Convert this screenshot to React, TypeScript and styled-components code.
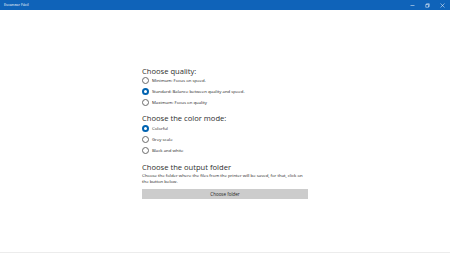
import styled, { createGlobalStyle } from "styled-components";

const GlobalStyle = createGlobalStyle`
  html, body {
    margin: 0;
    padding: 0;
    background: #ffffff;
  }
  body {
    font-family: "Open Sans", "Noto Sans", sans-serif;
  }
`;

const Window = styled.div`
  width: 450px;
  height: 253px;
  display: flex;
  flex-direction: column;
  background: #ffffff;
  overflow: hidden;
  border-bottom: 1px solid #ececec;
  box-sizing: border-box;
`;

const TitleBar = styled.div`
  height: 10px;
  background: #0f63b9;
  display: flex;
  align-items: center;
  justify-content: space-between;
  padding-left: 4px;
  color: #ffffff;
  flex-shrink: 0;
`;

const Title = styled.span`
  font-size: 3.8px;
  line-height: 10px;
`;

const Controls = styled.div`
  display: flex;
  height: 10px;
`;

const ControlButton = styled.div`
  width: 15px;
  height: 10px;
  display: flex;
  align-items: center;
  justify-content: center;
`;

const Content = styled.div`
  flex: 1;
  display: flex;
  justify-content: center;
  padding-top: 56px;
`;

const Column = styled.div`
  width: 166px;
  display: flex;
  flex-direction: column;
`;

const Heading = styled.h2<{ $top?: number }>`
  margin: ${(p) => p.$top ?? 0}px 0 0 0;
  font-size: 7.6px;
  font-weight: 400;
  color: #2e2e2e;
  line-height: 10px;
`;

const RadioList = styled.div<{ $top?: number }>`
  display: flex;
  flex-direction: column;
  gap: 3px;
  margin-top: ${(p) => p.$top ?? 0}px;
`;

const RadioRow = styled.label`
  display: flex;
  align-items: center;
  gap: 3px;
  height: 8px;
  font-size: 4.3px;
  color: #222222;
`;

const Circle = styled.span<{ $checked: boolean }>`
  width: 7px;
  height: 7px;
  border-radius: 50%;
  box-sizing: border-box;
  flex-shrink: 0;
  background: #ffffff;
  border: ${(p) => (p.$checked ? "2px solid #0063b1" : "0.6px solid #6a6a6a")};
`;

const Description = styled.p`
  margin: 0;
  font-size: 4.3px;
  line-height: 6px;
  color: #222222;
`;

const FolderButton = styled.button`
  margin-top: 5px;
  height: 10px;
  width: 100%;
  border: none;
  background: #cccccc;
  font-family: inherit;
  font-size: 4.5px;
  color: #222222;
  padding: 0;
`;

interface RadioProps {
  label: string;
  checked?: boolean;
}

const Radio = ({ label, checked = false }: RadioProps) => (
  <RadioRow>
    <Circle $checked={checked} />
    {label}
  </RadioRow>
);

const App = () => {
  return (
    <>
      <GlobalStyle />
      <Window>
        <TitleBar>
          <Title>Escanear Fácil</Title>
          <Controls>
            <ControlButton>
              <svg width="5" height="5" viewBox="0 0 10 10">
                <path d="M1 5h8" stroke="#fff" strokeWidth="1" />
              </svg>
            </ControlButton>
            <ControlButton>
              <svg width="5" height="5" viewBox="0 0 10 10">
                <path d="M1.5 3h5.5v5.5H1.5z M3 3V1.5h5.5V7H7" fill="none" stroke="#fff" strokeWidth="1" />
              </svg>
            </ControlButton>
            <ControlButton>
              <svg width="5" height="5" viewBox="0 0 10 10">
                <path d="M1 1l8 8M9 1l-8 8" stroke="#fff" strokeWidth="1" />
              </svg>
            </ControlButton>
          </Controls>
        </TitleBar>
        <Content>
          <Column>
            <Heading>Choose quality:</Heading>
            <RadioList>
              <Radio label="Minimum: Focus on speed." />
              <Radio label="Standard: Balance between quality and speed." checked />
              <Radio label="Maximum: Focus on quality" />
            </RadioList>
            <Heading $top={7}>Choose the color mode:</Heading>
            <RadioList $top={1}>
              <Radio label="Colorful" checked />
              <Radio label="Grey scale" />
              <Radio label="Black and white" />
            </RadioList>
            <Heading $top={8}>Choose the output folder</Heading>
            <Description>
              Choose the folder where the files from the printer will be saved, for that, click on
              the button below.
            </Description>
            <FolderButton>Choose folder</FolderButton>
          </Column>
        </Content>
      </Window>
    </>
  );
};

export default App;
